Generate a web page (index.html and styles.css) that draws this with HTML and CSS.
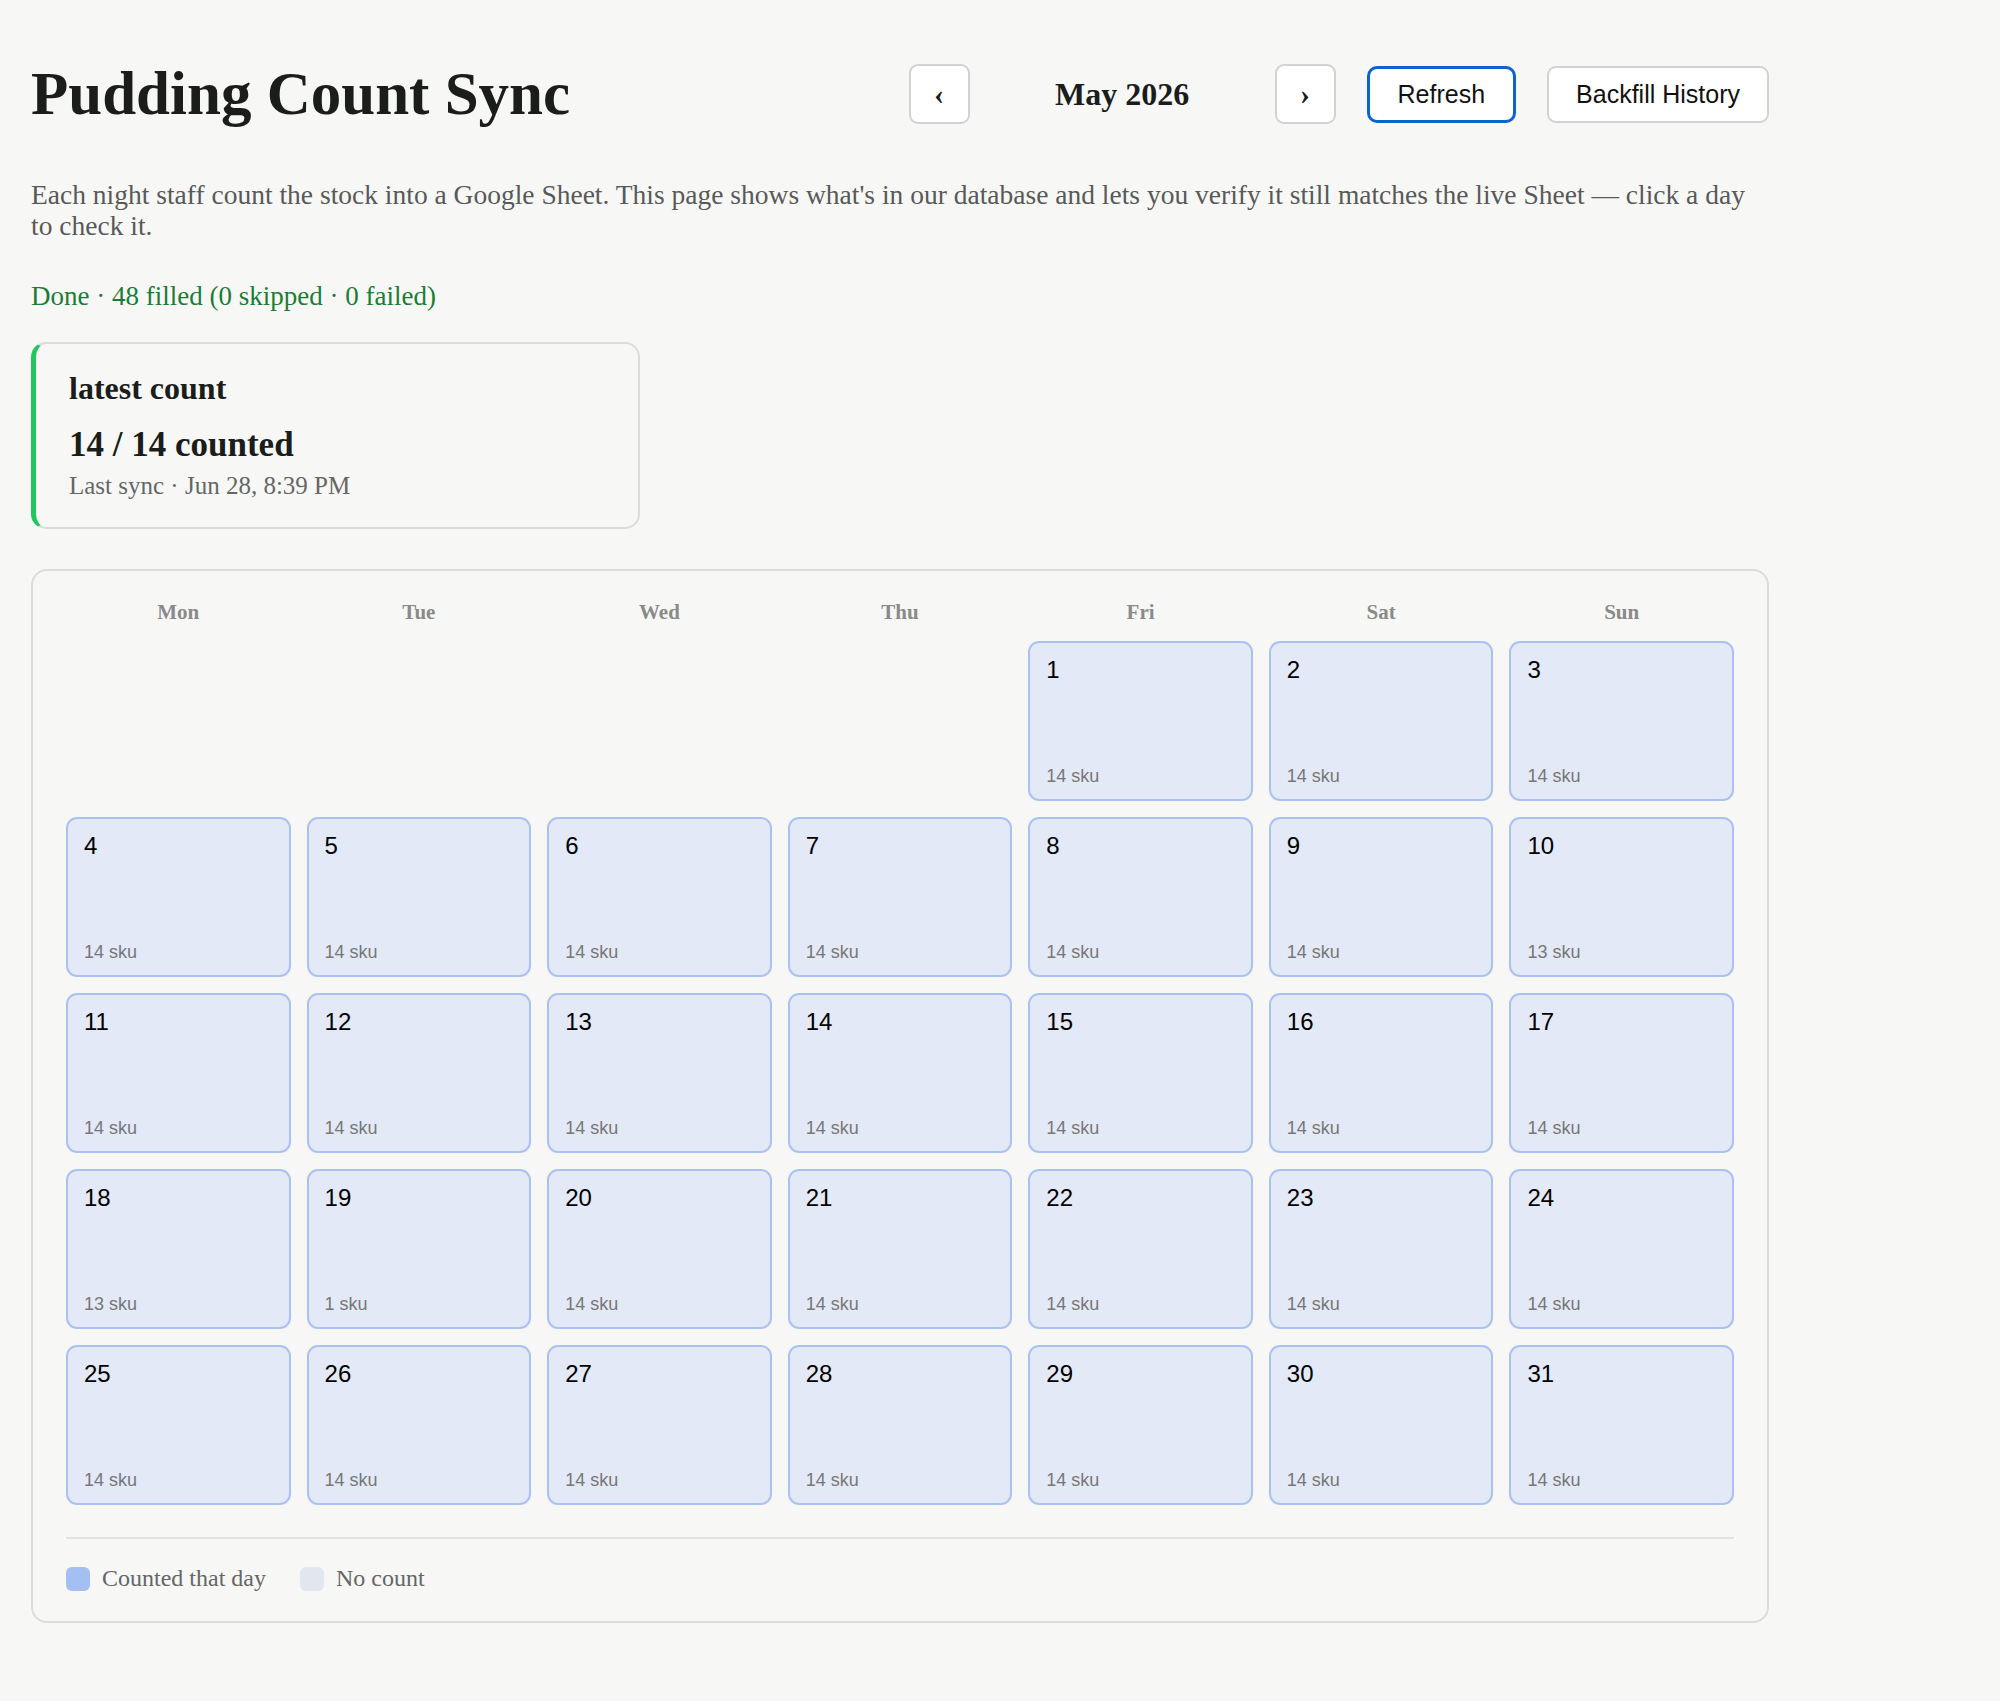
FILE: index.html
```html
<!DOCTYPE html>
<html lang="en">
<head>
    <meta charset="UTF-8">
    <meta name="viewport" content="width=device-width, initial-scale=1.0">
    <title>Pudding Count Sync</title>
    <link rel="stylesheet" href="styles.css">
</head>
<body>
    <div class="page">
        <header class="top-bar">
            <h1 class="page-title">Pudding Count Sync</h1>
            <div class="controls">
                <div class="month-nav">
                    <button class="nav-btn" aria-label="Previous month">&lsaquo;</button>
                    <span class="month-label">May 2026</span>
                    <button class="nav-btn" aria-label="Next month">&rsaquo;</button>
                </div>
                <button class="btn btn-primary">Refresh</button>
                <button class="btn">Backfill History</button>
            </div>
        </header>

        <p class="intro">Each night staff count the stock into a Google Sheet. This page shows what's in our database and lets you verify it still matches the live Sheet — click a day to check it.</p>

        <p class="status">Done · 48 filled (0 skipped · 0 failed)</p>

        <div class="latest-card">
            <div class="latest-label">latest count</div>
            <div class="latest-value">14 / 14 counted</div>
            <div class="latest-meta">Last sync · Jun 28, 8:39 PM</div>
        </div>

        <section class="calendar">
            <div class="weekdays">
                <div>Mon</div>
                <div>Tue</div>
                <div>Wed</div>
                <div>Thu</div>
                <div>Fri</div>
                <div>Sat</div>
                <div>Sun</div>
            </div>

            <div class="days">
                <div class="day-empty"></div>
                <div class="day-empty"></div>
                <div class="day-empty"></div>
                <div class="day-empty"></div>
                <div class="day counted"><span class="day-num">1</span><span class="day-sku">14 sku</span></div>
                <div class="day counted"><span class="day-num">2</span><span class="day-sku">14 sku</span></div>
                <div class="day counted"><span class="day-num">3</span><span class="day-sku">14 sku</span></div>

                <div class="day counted"><span class="day-num">4</span><span class="day-sku">14 sku</span></div>
                <div class="day counted"><span class="day-num">5</span><span class="day-sku">14 sku</span></div>
                <div class="day counted"><span class="day-num">6</span><span class="day-sku">14 sku</span></div>
                <div class="day counted"><span class="day-num">7</span><span class="day-sku">14 sku</span></div>
                <div class="day counted"><span class="day-num">8</span><span class="day-sku">14 sku</span></div>
                <div class="day counted"><span class="day-num">9</span><span class="day-sku">14 sku</span></div>
                <div class="day counted"><span class="day-num">10</span><span class="day-sku">13 sku</span></div>

                <div class="day counted"><span class="day-num">11</span><span class="day-sku">14 sku</span></div>
                <div class="day counted"><span class="day-num">12</span><span class="day-sku">14 sku</span></div>
                <div class="day counted"><span class="day-num">13</span><span class="day-sku">14 sku</span></div>
                <div class="day counted"><span class="day-num">14</span><span class="day-sku">14 sku</span></div>
                <div class="day counted"><span class="day-num">15</span><span class="day-sku">14 sku</span></div>
                <div class="day counted"><span class="day-num">16</span><span class="day-sku">14 sku</span></div>
                <div class="day counted"><span class="day-num">17</span><span class="day-sku">14 sku</span></div>

                <div class="day counted"><span class="day-num">18</span><span class="day-sku">13 sku</span></div>
                <div class="day counted"><span class="day-num">19</span><span class="day-sku">1 sku</span></div>
                <div class="day counted"><span class="day-num">20</span><span class="day-sku">14 sku</span></div>
                <div class="day counted"><span class="day-num">21</span><span class="day-sku">14 sku</span></div>
                <div class="day counted"><span class="day-num">22</span><span class="day-sku">14 sku</span></div>
                <div class="day counted"><span class="day-num">23</span><span class="day-sku">14 sku</span></div>
                <div class="day counted"><span class="day-num">24</span><span class="day-sku">14 sku</span></div>

                <div class="day counted"><span class="day-num">25</span><span class="day-sku">14 sku</span></div>
                <div class="day counted"><span class="day-num">26</span><span class="day-sku">14 sku</span></div>
                <div class="day counted"><span class="day-num">27</span><span class="day-sku">14 sku</span></div>
                <div class="day counted"><span class="day-num">28</span><span class="day-sku">14 sku</span></div>
                <div class="day counted"><span class="day-num">29</span><span class="day-sku">14 sku</span></div>
                <div class="day counted"><span class="day-num">30</span><span class="day-sku">14 sku</span></div>
                <div class="day counted"><span class="day-num">31</span><span class="day-sku">14 sku</span></div>
            </div>

            <div class="legend">
                <span class="legend-item"><span class="swatch swatch-counted"></span>Counted that day</span>
                <span class="legend-item"><span class="swatch swatch-empty"></span>No count</span>
            </div>
        </section>
    </div>
</body>
</html>
```

FILE: styles.css
```css
body {
    margin: 0;
    background: #f7f8f6;
    color: #1b1d1b;
    font-family: "Liberation Serif", "Times New Roman", serif;
}

.page {
    width: 1738px;
    padding: 63px 31px 60px;
}

/* header */
.top-bar {
    display: flex;
    align-items: center;
    justify-content: space-between;
}

.page-title {
    margin: 0;
    font-size: 61px;
    font-weight: bold;
    line-height: 62px;
}

.controls {
    display: flex;
    align-items: center;
    gap: 31px;
}

.month-nav {
    display: flex;
    align-items: center;
}

.month-label {
    width: 305px;
    text-align: center;
    font-size: 32px;
    font-weight: bold;
}

.nav-btn {
    width: 61px;
    height: 60px;
    padding: 0;
    background: #fff;
    border: 2px solid #d2d2d2;
    border-radius: 9px;
    font-family: "Liberation Serif", serif;
    font-size: 30px;
    font-weight: bold;
    color: #1b1d1b;
    cursor: pointer;
}

.btn {
    height: 57px;
    padding: 0 27px;
    background: #fff;
    border: 2px solid #d2d2d2;
    border-radius: 9px;
    font-family: "Liberation Sans", Arial, sans-serif;
    font-size: 25px;
    color: #111;
    cursor: pointer;
}

.btn-primary {
    border: 3px solid #0b62d1;
    border-radius: 10px;
    padding: 0 28px;
}

/* intro text */
.intro {
    max-width: 1715px;
    margin: 54px 0 0;
    font-size: 27.5px;
    line-height: 31px;
    color: #595959;
}

.status {
    margin: 40px 0 0;
    font-size: 27px;
    line-height: 31px;
    color: #1c7c35;
}

/* latest count card */
.latest-card {
    box-sizing: border-box;
    width: 609px;
    margin-top: 30px;
    padding: 26px 33px;
    border: 2px solid #dcdcdc;
    border-left: 5px solid #22c55e;
    border-radius: 15px;
}

.latest-label {
    font-size: 32px;
    font-weight: bold;
    line-height: 36px;
}

.latest-value {
    margin-top: 19px;
    font-size: 35px;
    font-weight: bold;
    line-height: 40px;
}

.latest-meta {
    margin-top: 6px;
    font-size: 25px;
    line-height: 30px;
    color: #666;
}

/* calendar */
.calendar {
    margin-top: 40px;
    padding: 29px 33px 29px;
    border: 2px solid #dcdcdc;
    border-radius: 16px;
}

.weekdays,
.days {
    display: grid;
    grid-template-columns: repeat(7, 1fr);
    column-gap: 16px;
}

.weekdays {
    margin-bottom: 17px;
    text-align: center;
    font-size: 21px;
    font-weight: bold;
    line-height: 24px;
    color: #8a8a8a;
}

.days {
    row-gap: 16px;
}

.day,
.day-empty {
    height: 160px;
    box-sizing: border-box;
}

.day {
    display: flex;
    flex-direction: column;
    justify-content: space-between;
    padding: 13px 16px 12px;
    border: 2px solid #aac2f2;
    border-radius: 11px;
    background: #e3e9f6;
    font-family: "Liberation Sans", Arial, sans-serif;
    cursor: pointer;
}

.day-num {
    font-size: 24px;
    line-height: 28px;
    color: #000;
}

.day-sku {
    font-size: 18px;
    line-height: 21px;
    color: #777;
}

.legend {
    display: flex;
    align-items: center;
    gap: 34px;
    margin-top: 32px;
    padding-top: 26px;
    border-top: 2px solid #e3e4e2;
    font-size: 24px;
    color: #666;
}

.legend-item {
    display: flex;
    align-items: center;
    gap: 12px;
}

.swatch {
    width: 24px;
    height: 24px;
    border-radius: 6px;
}

.swatch-counted {
    background: #a4bff2;
}

.swatch-empty {
    background: #e2e7ef;
}
```
